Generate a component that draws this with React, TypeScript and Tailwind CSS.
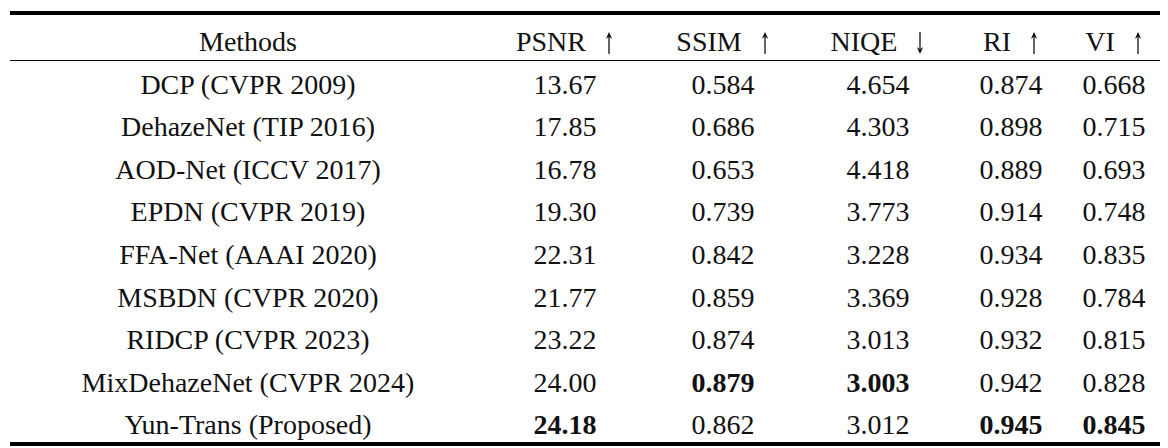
import React from "react";

type Row = {
    method: string;
    values: string[];
    bold: boolean[];
};

const rows: Row[] = [
    { method: "DCP (CVPR 2009)", values: ["13.67", "0.584", "4.654", "0.874", "0.668"], bold: [false, false, false, false, false] },
    { method: "DehazeNet (TIP 2016)", values: ["17.85", "0.686", "4.303", "0.898", "0.715"], bold: [false, false, false, false, false] },
    { method: "AOD-Net (ICCV 2017)", values: ["16.78", "0.653", "4.418", "0.889", "0.693"], bold: [false, false, false, false, false] },
    { method: "EPDN (CVPR 2019)", values: ["19.30", "0.739", "3.773", "0.914", "0.748"], bold: [false, false, false, false, false] },
    { method: "FFA-Net (AAAI 2020)", values: ["22.31", "0.842", "3.228", "0.934", "0.835"], bold: [false, false, false, false, false] },
    { method: "MSBDN (CVPR 2020)", values: ["21.77", "0.859", "3.369", "0.928", "0.784"], bold: [false, false, false, false, false] },
    { method: "RIDCP (CVPR 2023)", values: ["23.22", "0.874", "3.013", "0.932", "0.815"], bold: [false, false, false, false, false] },
    { method: "MixDehazeNet (CVPR 2024)", values: ["24.00", "0.879", "3.003", "0.942", "0.828"], bold: [false, true, true, false, false] },
    { method: "Yun-Trans (Proposed)", values: ["24.18", "0.862", "3.012", "0.945", "0.845"], bold: [true, false, false, true, true] },
];

const metrics = [
    { name: "PSNR", up: true },
    { name: "SSIM", up: true },
    { name: "NIQE", up: false },
    { name: "RI", up: true },
    { name: "VI", up: true },
];

// thin LaTeX-style \uparrow / \downarrow
const Arrow = ({ up }: { up: boolean }) => (
    <svg
        width="10"
        height="22"
        viewBox="0 0 10 22"
        className={`ml-[18px] inline-block align-[-3px] ${up ? "" : "rotate-180"}`}
    >
        <line x1="5" y1="2" x2="5" y2="22" stroke="#111" strokeWidth="1.3" />
        <path d="M5 0 L8.2 7 L5 4.6 L1.8 7 Z" fill="#111" />
    </svg>
);

const App: React.FC = () => {
    return (
        <div className="w-[1168px] h-[448px] bg-white px-[10px] pt-[11px]" style={{ fontFamily: '"Liberation Serif", "Times New Roman", serif' }}>
            <table className="w-[1150px] table-fixed border-collapse text-[28px] text-[#111] leading-none">
                <colgroup>
                    <col className="w-[476px]" />
                    <col className="w-[158px]" />
                    <col className="w-[158px]" />
                    <col className="w-[152px]" />
                    <col className="w-[114px]" />
                    <col className="w-[92px]" />
                </colgroup>
                <thead>
                    <tr className="h-[47px] border-t-[4px] border-b border-black">
                        <th className="pt-[10px] font-normal text-center">Methods</th>
                        {metrics.map((m) => (
                            <th key={m.name} className="pt-[10px] font-normal text-center whitespace-nowrap">
                                {m.name}
                                <Arrow up={m.up} />
                            </th>
                        ))}
                    </tr>
                </thead>
                <tbody>
                    {rows.map((r, i) => (
                        <tr
                            key={r.method}
                            className={`h-[42.67px] ${i === rows.length - 1 ? "border-b-[4px] border-black" : ""}`}
                        >
                            <td className="pt-[6px] text-center whitespace-nowrap">{r.method}</td>
                            {r.values.map((v, j) => (
                                <td key={j} className={`pt-[6px] text-center ${r.bold[j] ? "font-bold" : ""}`}>
                                    {v}
                                </td>
                            ))}
                        </tr>
                    ))}
                </tbody>
            </table>
        </div>
    );
};

export default App;
